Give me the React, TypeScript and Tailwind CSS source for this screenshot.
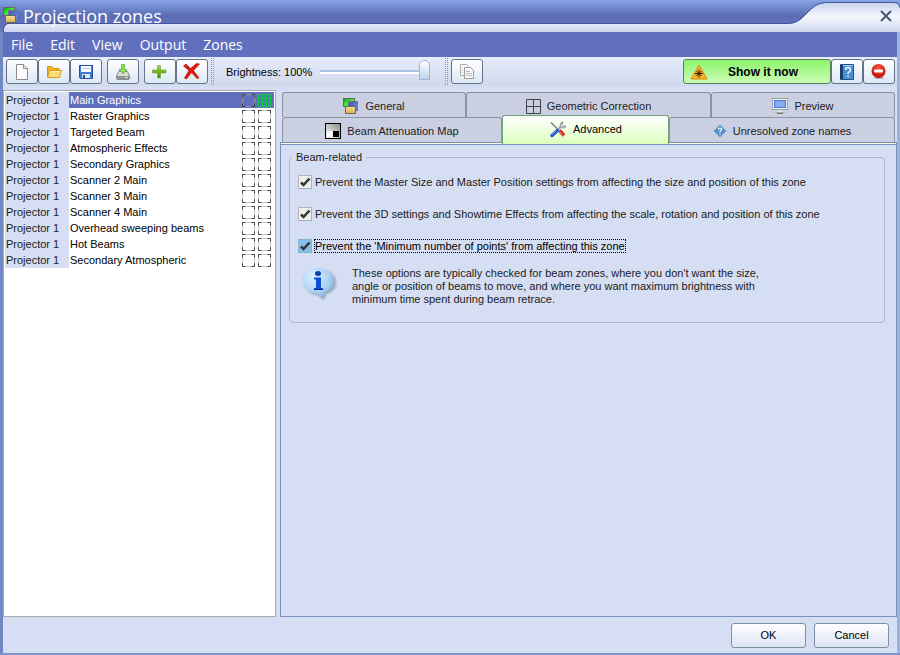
import { useState } from 'react'
import type { ReactNode } from 'react'

type Zone = { projector: string; name: string }

const ZONES: Array<Zone> = [
  'Main Graphics',
  'Raster Graphics',
  'Targeted Beam',
  'Atmospheric Effects',
  'Secondary Graphics',
  'Scanner 2 Main',
  'Scanner 3 Main',
  'Scanner 4 Main',
  'Overhead sweeping beams',
  'Hot Beams',
  'Secondary Atmospheric',
].map((name) => ({ projector: 'Projector 1', name }))

const MENUS = ['File', 'Edit', 'View', 'Output', 'Zones']

const OPTIONS = [
  'Prevent the Master Size and Master Position settings from affecting the size and position of this zone',
  'Prevent the 3D settings and Showtime Effects from affecting the scale, rotation and position of this zone',
  "Prevent the 'Minimum number of points' from affecting this zone",
]

function ZonesIcon() {
  return (
    <svg width="16" height="16" viewBox="0 0 16 16" className="shrink-0">
      <defs>
        <linearGradient id="zGreen" x1="0" y1="0" x2="1" y2="1"><stop offset="0" stopColor="#0a9c0a" /><stop offset="0.5" stopColor="#3ff03f" /><stop offset="1" stopColor="#0ac00a" /></linearGradient>
        <linearGradient id="zBlue" x1="0" y1="0" x2="1" y2="1"><stop offset="0" stopColor="#3550b8" /><stop offset="1" stopColor="#7f95e0" /></linearGradient>
        <linearGradient id="zGold" x1="0" y1="0" x2="0" y2="1"><stop offset="0" stopColor="#f7e2a0" /><stop offset="1" stopColor="#d8ae48" /></linearGradient>
      </defs>
      <rect x="0.5" y="0.5" width="11" height="8" fill="url(#zGreen)" stroke="#666" />
      <rect x="5.5" y="3.5" width="9" height="9" fill="url(#zBlue)" stroke="#777" />
      <rect x="2.5" y="8.5" width="10" height="7" fill="url(#zGold)" stroke="#666" />
    </svg>
  )
}

function NewIcon() {
  return (
    <svg width="16" height="18" viewBox="0 0 16 18">
      <path d="M2.5 1.5h7l4 4v11h-11z" fill="#fdfdfd" stroke="#8c8c8c" />
      <path d="M9.5 1.5v4h4" fill="#e4e4e4" stroke="#8c8c8c" />
    </svg>
  )
}

function OpenIcon() {
  return (
    <svg width="16" height="16" viewBox="0 0 16 16">
      <path d="M1.5 13V2.5H6L7.5 4.500H13V7" fill="#f2b52c" stroke="#d8920a" />
      <path d="M1.5 13.5 3.5 6.5h12l-2 7z" fill="#fbdc7c" stroke="#dc9a14" />
      <path d="M4.5 7.5H14" stroke="#fff0b8" />
    </svg>
  )
}

function SaveIcon() {
  return (
    <svg width="16" height="16" viewBox="0 0 16 16">
      <path d="M1.5 1.5h13v13h-12l-1-1z" fill="#3f78d0" stroke="#1f4fa4" />
      <rect x="3" y="2" width="10" height="6" fill="#f8fafe" />
      <path d="M4 4.5h8" stroke="#b9cdea" />
      <rect x="4" y="10" width="8" height="4" fill="#dfe4ec" />
      <rect x="5" y="11" width="2" height="3" fill="#1f4fa4" />
    </svg>
  )
}

function ImportIcon() {
  return (
    <svg width="16" height="18" viewBox="0 0 16 18">
      <path d="M3.5 8.5h9l2 4.500v2.500q0 1-1 1h-11q-1 0-1-1V13z" fill="#dcdcdc" stroke="#8a8a8a" />
      <path d="M2 13h12v3H2z" fill="#8f9390" />
      <path d="M10 14.5h3" stroke="#d8f0c0" />
      <path d="M6.5 1.5h3v5H12L8 11 4 6.500h2.500z" fill="#8fdc5a" stroke="#5cb42c" strokeWidth="0.8" />
    </svg>
  )
}

function AddIcon() {
  return (
    <svg width="16" height="16" viewBox="0 0 16 16">
      <defs><linearGradient id="plus" x1="0" y1="0" x2="0" y2="1"><stop offset="0" stopColor="#a4d83c" /><stop offset="1" stopColor="#4c8c0c" /></linearGradient></defs>
      <path d="M5.500 1.500h3v4.500H14v3H8.500v5h-3V9H.5V6h5z" fill="url(#plus)" stroke="#6ca42c" strokeWidth="0.6" />
    </svg>
  )
}

function DeleteIcon() {
  return (
    <svg width="18" height="18" viewBox="0 0 18 18">
      <path d="M.5 3 3 1l4.500 4.500L13.500.5l3 .5-6 6.500 5.500 7.500-2 .5L8.500 9.500 3.500 16l-2-1 4.500-7.500z" fill="#e3170a" stroke="#b40c04" strokeWidth="0.6" />
    </svg>
  )
}

function CopyIcon() {
  return (
    <svg width="16" height="18" viewBox="0 0 16 18">
      <path d="M1.5 1.5h6l2 2v9h-8z" fill="#fafafa" stroke="#aaa" />
      <path d="M5.5 4.5h6l3 3v8h-9z" fill="#fafafa" stroke="#999" />
      <path d="M7 8.5h4M7 10.5h6M7 12.5h6M3 5.5h1M3 7.5h1M3 9.5h1" stroke="#bbb" />
    </svg>
  )
}

function LaserIcon() {
  return (
    <svg width="18" height="16" viewBox="0 0 18 16" className="shrink-0">
      <path d="M9 1 17 15H1z" fill="#fbb12e" stroke="#e08a0c" strokeLinejoin="round" />
      <path d="M9 5.5v8M5 9.5h8M6.500 7l5 5M11.500 7l-5 5" stroke="#2a1c00" />
    </svg>
  )
}

function HelpBookIcon() {
  return (
    <svg width="16" height="18" viewBox="0 0 16 18">
      <path d="M1.5 1.5h13v15h-13z" fill="#4a90d6" stroke="#205088" />
      <path d="M1 2h3v14H1z" fill="#1c3f6c" />
      <path d="M4 2.5h10" stroke="#a9d0f2" />
      <path d="M6.500 7q0-2.500 2.500-2.500T11.500 7q0 1.500-2 2.500-.5.500-.5 1.500M9 12.500V14" fill="none" stroke="#e8f4ff" strokeWidth="1.5" />
    </svg>
  )
}

function StopIcon() {
  return (
    <svg width="16" height="18" viewBox="0 0 16 18">
      <defs><radialGradient id="stop" cx="0.5" cy="0.3" r="0.7"><stop offset="0" stopColor="#f4553a" /><stop offset="1" stopColor="#c00c04" /></radialGradient></defs>
      <ellipse cx="8" cy="15" rx="5" ry="1" fill="#a8b0b8" />
      <circle cx="7.5" cy="8" r="7" fill="url(#stop)" />
      <rect x="3" y="6.5" width="9" height="3" rx="1" fill="#fff" />
    </svg>
  )
}

function GridIcon() {
  return (
    <svg width="15" height="15" viewBox="0 0 15 15" className="shrink-0">
      <path d="M.5.5h14v14H.5zM7.5.5v14M.5 7.500h14" fill="none" stroke="#3c4048" />
    </svg>
  )
}

function MonitorIcon() {
  return (
    <svg width="16" height="16" viewBox="0 0 16 16" className="shrink-0">
      <rect x="0.5" y="0.5" width="15" height="11" fill="#f4f4ee" stroke="#9a9e98" />
      <rect x="2.5" y="2.5" width="11" height="7" fill="#84acf0" stroke="#4a78d0" />
      <path d="M6 12h4v2H6z" fill="#e4e6e0" />
      <path d="M3 14.5h10" stroke="#a8aca4" />
      <path d="M5 15.5h6" stroke="#747870" />
    </svg>
  )
}

function AttenuationIcon() {
  return (
    <svg width="16" height="16" viewBox="0 0 16 16" className="shrink-0">
      <defs><linearGradient id="att" x1="1" y1="0" x2="0" y2="1"><stop offset="0" stopColor="#8c8c8c" /><stop offset="1" stopColor="#fff" /></linearGradient></defs>
      <rect x="0.5" y="0.5" width="15" height="15" fill="url(#att)" stroke="#000" />
      <path d="M2 8h6v6H2z" fill="#f6f6f6" />
      <path d="M8 8h6v6H8z" fill="#000" />
    </svg>
  )
}

function ToolsIcon() {
  return (
    <svg width="18" height="17" viewBox="0 0 18 17" className="shrink-0">
      <path d="M2 1.500 9 8.500" stroke="#7b8088" strokeWidth="1.5" />
      <path d="M10.500 9.500 15 14.500" stroke="#d8281c" strokeWidth="3.5" />
      <path d="M10.500 10.500 14 14.500" stroke="#f48a78" />
      <path d="M8 9.500 12 5.500" stroke="#a8acb0" strokeWidth="2.5" />
      <path d="M14 1a3 3 0 1 0 3 4l-2.500.200L12.800 3.500z" fill="#e2e4e6" stroke="#85898e" />
      <path d="M8.500 9.500 3 14.500" stroke="#2258d0" strokeWidth="3.5" strokeLinecap="round" />
      <path d="M7.500 9.500 3 13.500" stroke="#7ba6f4" />
    </svg>
  )
}

function UnresolvedIcon() {
  return (
    <svg width="14" height="14" viewBox="0 0 14 14" className="shrink-0">
      <path d="M7 .7 13.300 7 7 13.300.7 7z" fill="#4f8cc8" stroke="#8ab0d8" />
      <path d="M5.300 5.700q0-1.700 1.700-1.700t1.700 1.500Q8.700 6.500 7 7.300v.9M7 9.300v1.200" fill="none" stroke="#fff" strokeWidth="1.2" />
    </svg>
  )
}

function InfoIcon() {
  return (
    <svg width="36" height="34" viewBox="0 0 36 34" className="shrink-0">
      <defs>
        <radialGradient id="info" cx="0.35" cy="0.3" r="0.8"><stop offset="0" stopColor="#dcefff" /><stop offset="0.6" stopColor="#acd2f4" /><stop offset="1" stopColor="#7ea6d0" /></radialGradient>
        <filter id="soft"><feGaussianBlur stdDeviation="1" /></filter>
      </defs>
      <path d="M18 3c9 0 16 5 16 12.500 0 6-4 10-10 11.500L22 33l-7-5C8 27 3 22 3 15.500 3 8 9 3 18 3z" fill="#8795b4" opacity="0.8" filter="url(#soft)" />
      <path d="M16 1c9 0 16 5.500 16 13 0 6-4 10-9.500 11.500L21 32l-7-6C6 25.500 0 20.500 0 14 0 6.500 7 1 16 1z" fill="url(#info)" />
      <ellipse cx="16" cy="6.5" rx="3" ry="2.5" fill="#0a3fb4" />
      <path d="M12 10.500h7V21h2v2h-9v-2h2v-8.500h-2z" fill="#0a50d8" />
      <path d="M12 22.5h9" stroke="#062c84" />
    </svg>
  )
}

// Two little status boxes shown at the end of every zone row
function ZoneMarks({ selected }: { selected: boolean }) {
  const frame = (x: number) => (
    <g fill="none">
      <path d={`M${x + 0.5} 1.5h12v12h-12z`} stroke={selected ? '#8d93ab' : '#c4c4c4'} />
      <path d={`M${x + 0.5} 4.500v-3h3m6 0h3v3m0 6v3h-3m-6 0h-3v-3`} stroke="#444" />
    </g>
  )
  return (
    <svg width="30" height="15" viewBox="0 0 30 15" className="block">
      {frame(0)}
      {selected ? <path d="M16.500 1.500h12v12h-12zM20.500 1v13M24.500 1v13M16 5.500h13M16 9.500h13" fill="none" stroke="#10c848" /> : frame(16)}
    </svg>
  )
}

function ToolButton({ label, children, className = '' }: { label: string; children: ReactNode; className?: string }) {
  return (
    <button type="button" aria-label={label} className={`flex h-[25px] w-8 items-center justify-center rounded-[3px] border border-[#647488] bg-linear-to-b from-white to-[#dce8f4] ${className}`}>
      {children}
    </button>
  )
}

function Grip() {
  return <div className="h-7 w-1 bg-[conic-gradient(#8c98b8_25%,transparent_0)] bg-size-[2px_2px]" />
}

function Tab({ icon, label, active = false }: { icon: ReactNode; label: string; active?: boolean }) {
  return (
    <button
      type="button"
      role="tab"
      aria-selected={active}
      className={active
        ? 'z-10 -mt-0.5 -mb-0.5 flex items-center justify-center gap-1.5 rounded-t-[3px] border border-b-0 border-[#78a078] bg-linear-to-b from-white to-[#dcffbe] pb-0.5 text-black'
        : 'flex items-center justify-center gap-1.5 rounded-t-[3px] border border-b-0 border-[#8c929e] bg-[#cad0e2] pt-0.5'}
    >
      {icon}
      <span>{label}</span>
    </button>
  )
}

function Option({ id, label, focused }: { id: string; label: string; focused: boolean }) {
  const [checked, setChecked] = useState(true)
  return (
    <div className="flex items-center gap-0.5">
      <span className="grid size-3.5 shrink-0">
        <input
          id={id}
          type="checkbox"
          checked={checked}
          onChange={() => setChecked(!checked)}
          className={`col-start-1 row-start-1 size-3.5 appearance-none border outline-none ${focused ? 'border-[#86b4d4] bg-[#84c0e8]' : 'border-[#b0b0b8] bg-[#eeeeee]'}`}
        />
        {checked && (
          <svg width="14" height="14" viewBox="0 0 14 14" className="pointer-events-none col-start-1 row-start-1">
            <path d="M3 7.500 5.500 10 11.500 3.500" fill="none" stroke="#333" strokeWidth="2.5" />
          </svg>
        )}
      </span>
      <label htmlFor={id} className={`border border-dotted leading-3 ${focused ? 'border-black text-black' : 'border-transparent'}`}>{label}</label>
    </div>
  )
}

function TitleBar() {
  return (
    <header className="relative flex h-8 bg-linear-to-b from-[#86a4e6] via-[#5b6cb4] to-[#6478c0]">
      <div className="flex min-w-0 flex-1 flex-col">
        <div className="relative z-10 flex h-[23px] items-center gap-1 pl-[3px] text-white">
          <div className="pt-1.5"><ZonesIcon /></div>
          <h1 className="pt-2 font-['Open_Sans','Noto_Sans',sans-serif] text-lg leading-6 whitespace-nowrap">Projection zones</h1>
        </div>
        <div className="ml-[3px] flex-1 rounded-tl-md border-t border-l border-[#46549a] bg-linear-to-b from-[#e2e8f8] to-[#cdd6ee]" />
      </div>
      <svg width="120" height="32" viewBox="0 0 120 32" className="shrink-0">
        <defs>
          <linearGradient id="flap" gradientUnits="userSpaceOnUse" x1="0" y1="3" x2="0" y2="32"><stop offset="0" stopColor="#c8d4ee" /><stop offset="0.45" stopColor="#f4f6fc" /><stop offset="0.75" stopColor="#e2e8f8" /><stop offset="1" stopColor="#cdd6ee" /></linearGradient>
        </defs>
        <path d="M0 24h8c18 0 20-21 38-21h68q6 0 6 5v24H0z" fill="url(#flap)" />
        <path d="M0 23.500h8c18 0 20-21 38-21h68q5.500 0 5.500 5" fill="none" stroke="#46549a" />
      </svg>
      <button type="button" aria-label="Close" className="absolute top-2 right-1.5 grid size-4 place-items-center">
        <svg width="12" height="12" viewBox="0 0 12 12"><path d="M1 1l10 10M11 1 1 11" stroke="#4c5678" strokeWidth="2" /></svg>
      </button>
    </header>
  )
}

export default function App() {
  const [brightness, setBrightness] = useState(100)
  const [current, setCurrent] = useState(0)
  return (
    <div className="flex min-h-screen flex-col border-b-2 border-[#8094cc] bg-[#d6def3] font-['Liberation_Sans',Arial,sans-serif] text-[11px] leading-4 text-[#1a1c22]">
      <TitleBar />
      <div className="flex flex-1 flex-col border-x-[3px] border-l-[#7088c4] border-r-[#9cb4dc]">
        <nav className="flex h-[25px] items-center gap-[17px] bg-[#6070be] px-2 font-['Open_Sans','Noto_Sans',sans-serif] text-sm text-white">
          {MENUS.map((menu) => <button key={menu} type="button">{menu}</button>)}
        </nav>

        <div role="toolbar" className="flex h-[29px] items-center bg-linear-to-b from-[#e6ecfa] to-[#d0d8ec] pr-0.5 pl-[3px]">
          <ToolButton label="New"><NewIcon /></ToolButton>
          <ToolButton label="Open"><OpenIcon /></ToolButton>
          <ToolButton label="Save"><SaveIcon /></ToolButton>
          <ToolButton label="Import" className="ml-[5px]"><ImportIcon /></ToolButton>
          <ToolButton label="Add zone" className="ml-[5px]"><AddIcon /></ToolButton>
          <ToolButton label="Delete zone" className="mr-0.5"><DeleteIcon /></ToolButton>
          <Grip />
          <label htmlFor="brightness" className="ml-3 text-black">Brightness: {brightness}%</label>
          <input
            id="brightness"
            type="range"
            value={brightness}
            onChange={(event) => setBrightness(Number(event.target.value))}
            className="mr-3.5 ml-2 h-5 w-[110px] appearance-none bg-transparent [&::-webkit-slider-runnable-track]:h-1 [&::-webkit-slider-runnable-track]:border-t-2 [&::-webkit-slider-runnable-track]:border-b-2 [&::-webkit-slider-runnable-track]:border-t-[#a9c4e4] [&::-webkit-slider-runnable-track]:border-b-white [&::-webkit-slider-thumb]:-mt-3 [&::-webkit-slider-thumb]:h-5 [&::-webkit-slider-thumb]:w-[11px] [&::-webkit-slider-thumb]:appearance-none [&::-webkit-slider-thumb]:rounded-t-full [&::-webkit-slider-thumb]:border [&::-webkit-slider-thumb]:border-[#a4b4cc] [&::-webkit-slider-thumb]:bg-linear-to-b [&::-webkit-slider-thumb]:from-white [&::-webkit-slider-thumb]:to-[#bcd4ec]"
          />
          <Grip />
          <ToolButton label="Copy" className="ml-[3px]"><CopyIcon /></ToolButton>
          <button type="button" className="ml-auto flex h-[25px] w-[148px] items-center rounded-[3px] border border-[#5c7c60] bg-linear-to-b from-[#8cf468] to-[#c8fcb4] pr-3 pl-1.5 text-xs font-bold text-black">
            <LaserIcon />
            <span className="flex-1 text-center">Show it now</span>
          </button>
          <ToolButton label="Help"><HelpBookIcon /></ToolButton>
          <ToolButton label="Stop"><StopIcon /></ToolButton>
        </div>

        <main className="mt-1 flex flex-1 gap-1">
          <div className="w-[273px] shrink-0 border border-[#aaaaae] bg-white p-px">
            <table className="w-full table-fixed border-collapse">
              <tbody>
                {ZONES.map((zone, index) => (
                  <tr key={zone.name} className="h-4" onClick={() => setCurrent(index)}>
                    <td className="w-16 bg-[#d6def3] p-0 pl-px">{zone.projector}</td>
                    <td className={`p-0 pl-px ${index === current ? 'bg-[#6070be] text-white' : 'text-black'}`}>{zone.name}</td>
                    <td className={`w-8 p-0 ${index === current ? 'bg-[#6070be]' : ''}`}><ZoneMarks selected={index === current} /></td>
                  </tr>
                ))}
              </tbody>
            </table>
          </div>

          <div className="flex min-w-0 flex-1 flex-col">
            <div role="tablist" className="mt-0.5 px-0.5">
              <div className="grid h-[25px] grid-cols-[184fr_245fr_184fr]">
                <Tab icon={<ZonesIcon />} label="General" />
                <Tab icon={<GridIcon />} label="Geometric Correction" />
                <Tab icon={<MonitorIcon />} label="Preview" />
              </div>
              <div className="grid h-[25px] grid-cols-[220fr_167fr_226fr]">
                <Tab icon={<AttenuationIcon />} label="Beam Attenuation Map" />
                <Tab icon={<ToolsIcon />} label="Advanced" active />
                <Tab icon={<UnresolvedIcon />} label="Unresolved zone names" />
              </div>
            </div>
            <div role="tabpanel" className="flex-1 border border-[#7890bc]">
              <div className="h-0.5 border-b border-[#7890bc] bg-[#f8fcd0]" />
              <fieldset className="mt-1 mr-[11px] ml-2 rounded border border-[#b0b8d0] px-2 pb-4">
                <legend className="-ml-1.5 px-1">Beam-related</legend>
                <div className="mt-2.5 flex flex-col gap-[18px]">
                  {OPTIONS.map((label, index) => <Option key={label} id={`option-${index}`} label={label} focused={index === 2} />)}
                </div>
                <div className="mt-3.5 flex gap-3.5 pl-1">
                  <InfoIcon />
                  <p className="max-w-[415px] leading-[13px]">
                    These options are typically checked for beam zones, where you don't want the size, angle or position of beams to move, and where you want maximum brightness with minimum time spent during beam retrace.
                  </p>
                </div>
              </fieldset>
            </div>
          </div>
        </main>

        <footer className="flex h-9 items-center justify-end gap-2 pr-2 text-black">
          <button type="button" className="h-[25px] w-[75px] rounded-[3px] border border-[#7c90a4] bg-linear-to-b from-white to-[#dce4f4]">OK</button>
          <button type="button" className="h-[25px] w-[75px] rounded-[3px] border border-[#7c90a4] bg-linear-to-b from-white to-[#dce4f4]">Cancel</button>
        </footer>
      </div>
    </div>
  )
}
